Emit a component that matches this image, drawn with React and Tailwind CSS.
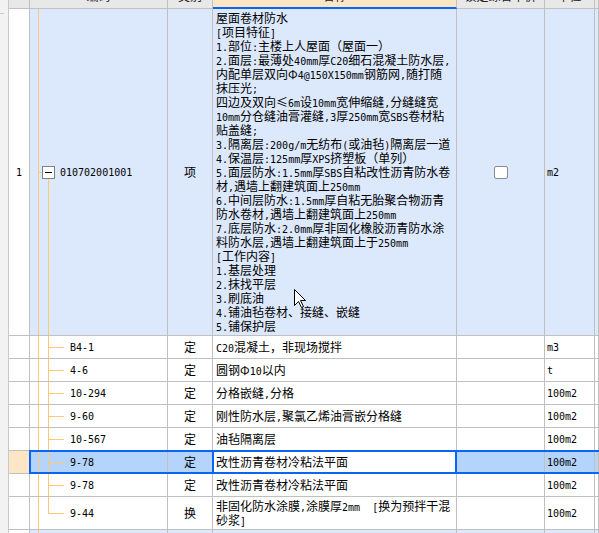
const GRID = "border-r border-b border-[#c0c0c0]";
const MONO = "font-[family-name:DejaVu_Sans_Mono,monospace] text-[10px]";

// ASCII runs render in a half-width mono face, CJK in Noto
function Txt({ s }) {
  const parts = s.split(/([\x20-\x7e]+)/);
  return parts.map((p, i) =>
    /^[\x20-\x7e]+$/.test(p) ? (
      <span key={i} className={MONO}>
        {p}
      </span>
    ) : (
      <span key={i}>{p}</span>
    )
  );
}

function Line({ s }) {
  return (
    <div className="h-[14px] leading-[14px] whitespace-pre flex items-baseline">
      <Txt s={s} />
    </div>
  );
}

const FEATURES = [
  "屋面卷材防水",
  "[项目特征]",
  "1.部位:主楼上人屋面（屋面一）",
  "2.面层:最薄处40mm厚C20细石混凝土防水层,",
  "内配单层双向Φ4@150X150mm钢筋网,随打随",
  "抹压光;",
  "四边及双向≤6m设10mm宽伸缩缝,分缝缝宽",
  "10mm分仓缝油膏灌缝,3厚250mm宽SBS卷材粘",
  "贴盖缝;",
  "3.隔离层:200g/m无纺布(或油毡)隔离层一道",
  "4.保温层:125mm厚XPS挤塑板（单列）",
  "5.面层防水:1.5mm厚SBS自粘改性沥青防水卷",
  "材,遇墙上翻建筑面上250mm",
  "6.中间层防水:1.5mm厚自粘无胎聚合物沥青",
  "防水卷材,遇墙上翻建筑面上250mm",
  "7.底层防水:2.0mm厚非固化橡胶沥青防水涂",
  "料防水层,遇墙上翻建筑面上于250mm",
  "[工作内容]",
  "1.基层处理",
  "2.抹找平层",
  "3.刷底油",
  "4.铺油毡卷材、接缝、嵌缝",
  "5.铺保护层",
];

const ITEMS = [
  { code: "B4-1", type: "定", name: ["C20混凝土，非现场搅拌"], unit: "m3" },
  { code: "4-6", type: "定", name: ["圆钢Φ10以内"], unit: "t" },
  { code: "10-294", type: "定", name: ["分格嵌缝,分格"], unit: "100m2" },
  { code: "9-60", type: "定", name: ["刚性防水层,聚氯乙烯油膏嵌分格缝"], unit: "100m2" },
  { code: "10-567", type: "定", name: ["油毡隔离层"], unit: "100m2" },
  { code: "9-78", type: "定", name: ["改性沥青卷材冷粘法平面"], unit: "100m2", selected: true },
  { code: "9-78", type: "定", name: ["改性沥青卷材冷粘法平面"], unit: "100m2" },
  {
    code: "9-44",
    type: "换",
    name: ["非固化防水涂膜,涂膜厚2mm  [换为预拌干混", "砂浆]"],
    unit: "100m2",
    last: true,
  },
];

function Header() {
  const cell = `${GRID} shrink-0 bg-[#e8e8e8] flex items-center justify-center`;
  return (
    <div className="flex h-[25px] -mt-[16px] whitespace-nowrap text-[#222]">
      <div className={`${cell} w-[21px]`} />
      <div className={`${cell} w-[138px]`}>编码</div>
      <div className={`${cell} w-[45px]`}>类别</div>
      <div className="shrink-0 w-[244px] border-r border-[#c0c0c0] border-b-2 border-b-[#0a64f5] bg-[#fde6c6] flex items-center justify-center">
        名称
      </div>
      <div className={`${cell} w-[88px]`}>锁定综合单价</div>
      <div className={`${cell} w-[50px]`}>单位</div>
      <div className={`${cell} flex-1`} />
    </div>
  );
}

function MainRow() {
  return (
    <div className="flex h-[327px] bg-[#dce8fc]">
      <div className={`${GRID} w-[21px] shrink-0 bg-white flex items-center justify-center`}>
        <span className={MONO}>1</span>
      </div>
      <div className={`${GRID} w-[138px] shrink-0 relative flex items-center pl-[12px]`}>
        <span className="absolute left-[8px] top-0 bottom-0 w-px bg-[#ffc878]" />
        <span className="absolute left-[8px] top-1/2 w-[4px] h-px bg-[#ffc878]" />
        <span className="absolute left-[18px] top-[calc(50%+7px)] bottom-0 w-px bg-[#ffc878]" />
        <span className="relative w-[13px] h-[13px] border border-[#808080] bg-white flex items-center justify-center">
          <span className="w-[7px] h-px bg-black" />
        </span>
        <span className={`${MONO} ml-[5px]`}>010702001001</span>
      </div>
      <div className={`${GRID} w-[45px] shrink-0 flex items-center justify-center`}>项</div>
      <div className={`${GRID} w-[244px] shrink-0 pt-[2px] pl-[3px]`}>
        {FEATURES.map((l, i) => (
          <Line key={i} s={l} />
        ))}
      </div>
      <div className={`${GRID} w-[88px] shrink-0 flex items-center justify-center`}>
        <span className="w-[14px] h-[13px] rounded-[2px] border border-[#8a8a8a] bg-white" />
      </div>
      <div className={`${GRID} w-[50px] shrink-0 flex items-center pl-[2px]`}>
        <span className={MONO}>m2</span>
      </div>
      <div className={`${GRID} flex-1`} />
    </div>
  );
}

function ItemRow({ it }) {
  const rowBg = it.selected ? "bg-[#b4d4fc]" : "bg-white";
  return (
    <div className={`relative flex ${it.last ? "h-[33px]" : "h-[23px]"} ${rowBg}`}>
      <div className={`${GRID} w-[21px] shrink-0 ${it.selected ? "bg-[#fde6c6]" : "bg-white"}`} />
      <div className={`${GRID} w-[138px] shrink-0 relative flex items-center pl-[40px]`}>
        <span className="absolute left-[8px] top-0 bottom-0 w-px bg-[#ffc878]" />
        <span
          className={`absolute left-[18px] top-0 w-px bg-[#ffc878] ${it.last ? "h-1/2" : "bottom-0"}`}
        />
        <span className="absolute left-[18px] top-1/2 w-[16px] h-px bg-[#ffc878]" />
        <span className={MONO}>{it.code}</span>
      </div>
      <div className={`${GRID} w-[45px] shrink-0 flex items-center justify-center`}>{it.type}</div>
      <div
        className={`${GRID} w-[244px] shrink-0 flex flex-col justify-center pl-[3px] ${
          it.selected ? "bg-white" : ""
        }`}
      >
        {it.name.map((l, i) => (
          <Line key={i} s={l} />
        ))}
      </div>
      <div className={`${GRID} w-[88px] shrink-0`} />
      <div className={`${GRID} w-[50px] shrink-0 flex items-center pl-[2px]`}>
        <span className={MONO}>{it.unit}</span>
      </div>
      <div className={`${GRID} flex-1`} />
      {it.selected && (
        <>
          <div className="absolute left-[20px] -right-[4px] -top-[1px] bottom-0 border-2 border-[#0a64f5] pointer-events-none" />
          <div className="absolute left-[203px] w-[245px] -top-[1px] bottom-0 border-2 border-[#0a64f5] pointer-events-none" />
        </>
      )}
    </div>
  );
}

function NextRow() {
  return (
    <div className="flex h-[23px] bg-[#dce8fc]">
      <div className={`${GRID} w-[21px] shrink-0 bg-white`} />
      <div className={`${GRID} w-[138px] shrink-0 relative`}>
        <span className="absolute left-[8px] top-0 bottom-0 w-px bg-[#ffc878]" />
      </div>
      <div className={`${GRID} w-[45px] shrink-0`} />
      <div className={`${GRID} w-[244px] shrink-0`} />
      <div className={`${GRID} w-[88px] shrink-0`} />
      <div className={`${GRID} w-[50px] shrink-0`} />
      <div className={`${GRID} flex-1`} />
    </div>
  );
}

function Cursor() {
  return (
    <svg
      className="absolute left-[294px] top-[289px]"
      width="13"
      height="20"
      viewBox="0 0 13 20"
    >
      <path
        d="M0.5 0.5 L0.5 16.5 L4.5 12.5 L7.5 18.5 L9.5 17.5 L6.5 11.5 L11.5 11.5 Z"
        fill="white"
        stroke="black"
        strokeWidth="1"
      />
    </svg>
  );
}

export default function App() {
  return (
    <div className="relative w-[599px] h-[533px] overflow-hidden bg-white text-black text-[12px] font-[family-name:Noto_Sans_CJK_SC,sans-serif] flex">
      <div className="w-[9px] shrink-0 bg-[#f2f2f2] border-r border-[#c8c8c8]">
        <div className="mt-[13px] w-[4px] h-px bg-[#c8c8c8]" />
      </div>
      <div className="flex-1 min-w-0">
        <Header />
        <MainRow />
        {ITEMS.map((it, i) => (
          <ItemRow key={i} it={it} />
        ))}
        <NextRow />
      </div>
      <Cursor />
    </div>
  );
}
